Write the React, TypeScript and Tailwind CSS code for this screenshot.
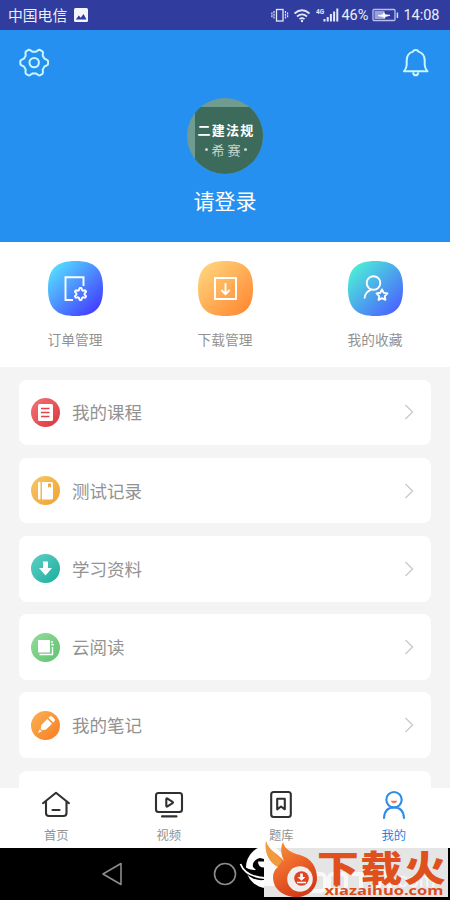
import type { ReactNode } from "react";

// Gear outline with soft, flattened teeth
function gearPath(cx: number, cy: number, base: number, amp: number, offset = 0) {
  const points: string[] = [];
  for (let i = 0; i < 96; i++) {
    const a = (i / 96) * Math.PI * 2;
    const wave = Math.max(-0.9, Math.min(1, 1.5 * Math.cos(6 * a + offset)));
    const r = base + amp * wave;
    points.push(`${(cx + r * Math.cos(a)).toFixed(2)} ${(cy + r * Math.sin(a)).toFixed(2)}`);
  }
  return `M${points.join("L")}Z`;
}

type MenuItem = {
  label: string;
  badge: string;
  icon: ReactNode;
};

const menuItems: MenuItem[] = [
  {
    label: "我的课程",
    badge: "bg-linear-to-br from-[#f27478] to-[#dc2f38]",
    icon: (
      <>
        <rect x="7" y="6" width="15" height="17" rx="1.5" fill="#fff" />
        <path d="M10 10.500h8.500M10 14.500h8.500M10 18.500h8.500" stroke="#e0444b" strokeWidth="1.500" />
      </>
    ),
  },
  {
    label: "测试记录",
    badge: "bg-linear-to-br from-[#f6c766] to-[#f0a12c]",
    icon: (
      <>
        <rect x="7" y="6" width="2.500" height="17.500" rx="1" fill="#fff" />
        <path d="M11 6h9.500q1.500 0 1.500 1.500v14.500q0 1.500-1.500 1.500h-9.500z" fill="#fff" />
        <path d="M17 7.500h3v4.300l-1.500-1.100-1.500 1.100z" fill="#f0a944" />
      </>
    ),
  },
  {
    label: "学习资料",
    badge: "bg-linear-to-br from-[#5bd0c4] to-[#12ad9f]",
    icon: <path d="M12 7.500h5v6.500h4l-6.500 7.500-6.500-7.500h4z" fill="#fff" />,
  },
  {
    label: "云阅读",
    badge: "bg-linear-to-br from-[#93dc9c] to-[#5cc26e]",
    icon: (
      <>
        <path d="M7 7h12v12.500h-12z" fill="#fff" />
        <path d="M8.500 21.500h13v-7.500M21 8v2.300M20.300 11.800h2.500" fill="none" stroke="#fff" strokeWidth="1.400" />
      </>
    ),
  },
  {
    label: "我的笔记",
    badge: "bg-linear-to-br from-[#fbb154] to-[#f67c1c]",
    icon: (
      <g transform="rotate(45 14.500 14.500)" fill="#fff">
        <path d="M11.200 5q0-1.500 1.500-1.500h3.600q1.500 0 1.500 1.500v2h-6.600z" />
        <path d="M11.200 8.600h6.600v8.400l-2.300 3.200h-2l-2.300-3.200z" />
        <path d="M13 21.300h3l-1.500 3.900z" />
      </g>
    ),
  },
];

const shortcuts = [
  {
    label: "订单管理",
    from: "#55dcff",
    to: "#443cff",
    icon: (
      <>
        <path d="M35.500 25v-8.800H17.500v22.800h7.500" />
        <path d={gearPath(32.500, 33, 5, 1, Math.PI)} strokeLinejoin="round" />
      </>
    ),
  },
  {
    label: "下载管理",
    from: "#ffd27a",
    to: "#ff8b35",
    icon: <path d="M17 17h21v21h-21zM27.500 22v11M23.300 29l4.200 4.200 4.200-4.200" />,
  },
  {
    label: "我的收藏",
    from: "#4dedd8",
    to: "#4a63ff",
    icon: (
      <>
        <circle cx="25.500" cy="22" r="6.800" />
        <path d="M16.500 37.500q.4-6.500 7-8.800" />
        <path
          d="M34 28.400l1.700 3.400 3.800.6-2.700 2.700.6 3.800-3.400-1.800-3.400 1.800.6-3.800-2.700-2.700 3.800-.6z"
          strokeLinejoin="round"
        />
      </>
    ),
  },
];

const tabs = [
  {
    label: "首页",
    active: false,
    icon: (
      <>
        <path d="M2 13.200 15 2.800l13 10.400M5 11v12q0 3 3 3h14.500q3 0 3-3V11" />
        <path d="M11.500 20h7" />
      </>
    ),
  },
  {
    label: "视频",
    active: false,
    icon: (
      <>
        <rect x="2" y="3" width="26" height="19" rx="2.500" />
        <path d="M12.300 9.200q0-1.300 1.200-.6l5 3.200q1 .7 0 1.400l-5 3.200q-1.200.7-1.200-.6zM8 26.400h14.500" />
      </>
    ),
  },
  {
    label: "题库",
    active: false,
    icon: (
      <>
        <rect x="5.200" y="2" width="19.600" height="25" rx="2.500" />
        <path d="M11.200 8.800h7.600v10.500l-3.800-2.800-3.800 2.800z" />
      </>
    ),
  },
  {
    label: "我的",
    active: true,
    icon: (
      <>
        <circle cx="15" cy="9.700" r="7.700" />
        <path d="M5 28q.6-10.500 10-10.500t10 10.500" />
        <path d="M11.700 10.700h6.600q-.7 2.500-3.300 2.500t-3.300-2.500z" fill="#f17a55" stroke="none" />
      </>
    ),
  },
];

function StatusBar() {
  return (
    <div className="flex h-[30px] shrink-0 items-center bg-[#303d9f] text-[#eceefa]">
      <span className="ml-2 text-[14.800px] leading-none">中国电信</span>
      <svg className="ml-[7px]" width="14" height="14" viewBox="0 0 14 14">
        <rect width="14" height="14" rx="1.500" fill="#f4f5ff" />
        <path d="M1.800 11.500l3-4 2 2.300 2.700-3.800 3 5.500z" fill="#303d9f" />
      </svg>
      <svg className="ml-auto" width="69" height="20" viewBox="0 0 69 20" fill="none" stroke="#e4e7fa">
        <rect x="5.500" y="4.500" width="6.500" height="11.500" strokeWidth="1.300" />
        <path d="M3 6v8M14.500 6v8M.9 7.500v5M16.600 7.500v5" strokeWidth="1.200" strokeDasharray="2 .8" />
        <path d="M23.500 8.500q7.500-6.500 15 0M26 11.500q5-4.200 10 0M28.500 14.200q2.500-2 5 0" strokeWidth="1.700" />
        <circle cx="31" cy="16" r="1.200" fill="#e4e7fa" stroke="none" />
        <text x="45" y="8.500" fill="#e4e7fa" stroke="none" fontSize="6.500" fontWeight="700" fontFamily="Roboto">
          4G
        </text>
        <path d="M53.500 14v2.500M56.700 12v4.500M59.900 9v7.500M63.100 6.500v10M66.300 3.500v13" strokeWidth="2" />
      </svg>
      <span className="ml-[1px] pt-[2px] font-[Roboto] text-[14.500px] leading-none">46%</span>
      <svg className="ml-1" width="27" height="14" viewBox="0 0 27 14">
        <rect x="1" y="1.500" width="22" height="11" rx="1" fill="none" stroke="#b9c0ee" strokeWidth="1.300" />
        <rect x="2.500" y="3" width="10" height="8" fill="#9aa3dc" />
        <path d="M6 7.600l5-.8.900-2 1.300 2 4.800.5-4.600 1.200-1 1.800-1.300-1.700z" fill="#fff" stroke="#fff" strokeWidth=".8" />
        <path d="M25.400 4.500v5.500" stroke="#d5d9f6" strokeWidth="1.500" />
      </svg>
      <span className="ml-1 mr-[10.500px] pt-[2px] font-[Roboto] text-[14.500px] leading-none">14:08</span>
    </div>
  );
}

function Header() {
  return (
    <header className="flex h-[212px] shrink-0 flex-col bg-[#2590ef]">
      <div className="flex h-[68px] justify-between px-[18px] pt-4">
        <svg width="32" height="32" viewBox="0 0 32 32" fill="none" stroke="#c9f6ff" strokeWidth="2" strokeLinejoin="round">
          <path d={gearPath(16.200, 16.600, 12.300, 1.600)} />
          <circle cx="16.200" cy="16.600" r="4.700" />
        </svg>
        <svg width="32" height="32" viewBox="0 0 32 32" fill="none" stroke="#c9f6ff" strokeWidth="2" strokeLinejoin="round">
          <path d="M4 25.300h23.500q-2.800-3.200-2.800-6.500v-4.500c0-5-2.600-7.600-6.200-8.700q-.5-1.600-2.800-1.600t-2.800 1.600c-3.600 1.100-6.200 3.700-6.200 8.700v4.500q0 3.300-2.700 6.500z" />
          <path d="M13.100 26.300q.4 3 2.600 3t2.600-3" />
        </svg>
      </div>
      <div className="flex flex-col items-center">
        <div className="h-[76px] w-[76px] overflow-hidden rounded-full bg-[#709b91] pl-[8px] pt-[9px]">
          <div className="flex h-full w-full flex-col items-center bg-[#3c6b5b] pr-[6px] text-white">
            <span className="mt-[14px] whitespace-nowrap text-[13px] font-bold leading-[18px] tracking-[1.200px]">
              二建法规
            </span>
            <div className="flex items-center gap-[4px] text-[13px] leading-[21px] text-[#c5d5ce]">
              <i className="h-[3px] w-[3px] rounded-full bg-[#c5d5ce]" />
              <span className="whitespace-pre">希 赛</span>
              <i className="h-[3px] w-[3px] rounded-full bg-[#c5d5ce]" />
            </div>
          </div>
        </div>
        <span className="mt-[11px] text-[21px] leading-[30px] text-white">请登录</span>
      </div>
    </header>
  );
}

function Shortcuts() {
  return (
    <div className="grid h-[125px] shrink-0 grid-cols-3 bg-white">
      {shortcuts.map((item, index) => (
        <div key={item.label} className="flex flex-col items-center pt-[19px]">
          <svg width="55" height="55" viewBox="0 0 55 55" fill="none">
            <defs>
              <linearGradient id={`shortcut-${index}`} x1="0.1" y1="0.1" x2="0.9" y2="0.9">
                <stop stopColor={item.from} />
                <stop offset="1" stopColor={item.to} />
              </linearGradient>
            </defs>
            <path
              d="M27.500 0C47 0 55 8 55 27.500S47 55 27.500 55 0 47 0 27.500 8 0 27.500 0z"
              fill={`url(#shortcut-${index})`}
            />
            <g stroke="#fff" strokeWidth="1.900">
              {item.icon}
            </g>
          </svg>
          <span className="mt-[13px] text-[13.700px] leading-5 text-[#929292]">{item.label}</span>
        </div>
      ))}
    </div>
  );
}

function Menu() {
  return (
    <div className="flex min-h-0 flex-1 flex-col gap-[12.700px] overflow-hidden bg-[#f4f4f4] px-[19px] pt-[12.700px]">
      {menuItems.map((item) => (
        <div key={item.label} className="flex h-[65.500px] shrink-0 items-center rounded-lg bg-white pl-3 pr-[17px]">
          <div className={`h-[29px] w-[29px] rounded-full ${item.badge}`}>
            <svg width="29" height="29" viewBox="0 0 29 29">
              {item.icon}
            </svg>
          </div>
          <span className="ml-3 text-[17.500px] leading-6 text-[#929292]">{item.label}</span>
          <svg className="ml-auto" width="10" height="16" viewBox="0 0 10 16" fill="none" stroke="#cacaca" strokeWidth="1.400">
            <path d="M1.500 1l7 7-7 7" />
          </svg>
        </div>
      ))}
      <div className="h-[65.500px] shrink-0 rounded-lg bg-white" />
    </div>
  );
}

function TabBar() {
  return (
    <nav className="grid h-[60px] shrink-0 grid-cols-4 bg-white">
      {tabs.map((tab) => (
        <div
          key={tab.label}
          className={`flex flex-col items-center pt-[2px] ${tab.active ? "text-[#2787e0]" : "text-[#929292]"}`}
        >
          <svg
            width="30"
            height="30"
            viewBox="0 0 30 30"
            fill="none"
            stroke={tab.active ? "#2f8ce4" : "#303030"}
            strokeWidth="2.100"
            strokeLinecap="round"
            strokeLinejoin="round"
          >
            {tab.icon}
          </svg>
          <span className="mt-[6px] text-[12.300px] leading-[18px]">{tab.label}</span>
        </div>
      ))}
    </nav>
  );
}

function SystemNav() {
  return (
    <div className="flex h-[52px] shrink-0 items-center bg-black">
      <svg className="ml-[101px]" width="136" height="26" viewBox="0 0 136 26" fill="none" stroke="#8c8c8c" strokeWidth="1.600">
        <path d="M2 13l18-10.500v21z" strokeLinejoin="round" />
        <circle cx="124" cy="13" r="10.500" />
      </svg>
    </div>
  );
}

function Watermark() {
  return (
    <div className="absolute bottom-0 left-[236px] h-[62px] w-[214px]">
      <svg width="214" height="62" viewBox="0 0 214 62">
        <defs>
          <linearGradient id="flame" x1="0" y1="0" x2="0.6" y2="1">
            <stop stopColor="#f6a03a" />
            <stop offset="0.5" stopColor="#ee6a2b" />
            <stop offset="1" stopColor="#d63b18" />
          </linearGradient>
        </defs>
        <circle cx="31" cy="29" r="21" fill="#fff" />
        <path d="M6 27c5 4 9 5 14 5l-3-3c-1-4 2-8 7-9l4 1v21c-10 1-19-4-22-15z" fill="#000" />
        <path d="M22 23.500h6v6q-6 0-6-6z" fill="#fff" />
        <path d="M4.500 26c3 8 11 13 24 14" fill="none" stroke="#fff" strokeWidth="1.800" />
        <path d="M28 10h184v49h-184z" fill="#e5e5e5" />
        <path d="M28 10h12q11 8 11 19t-11 19h-12z" fill="#fafafa" />
        <g fill="none" stroke="#f8f8f8" strokeWidth="4">
          <rect x="72" y="36" width="17" height="17" rx="4" />
          <rect x="93" y="36" width="17" height="17" rx="4" />
          <path d="M116 36h18M125 36v19M140 54l8-18 8 18" />
        </g>
        <text x="156" y="49" fill="#f8f8f8" fontSize="20" fontFamily="Liberation Sans">
          .com
        </text>
        {/* outer tongue on the left, then the taller one curling into the ring */}
        <path
          d="M30 3c2 9 11 12 18 20-3-7-4-13-1-19 2 8 9 11 17 13 11 3 17 12 17 23 0 11-9 19-20 19-14 0-24-8-24-20 0-4 2-8 5-10-7-4-14-12-12-26z"
          fill="url(#flame)"
        />
        <path d="M30 3c2 9 11 12 16 20l-4 6c-7-4-14-12-12-26z" fill="#f29a40" />
        <circle cx="64" cy="41" r="12.800" fill="#efefef" />
        <circle cx="65.500" cy="40.500" r="7.300" fill="#df4423" />
        <path d="M64.200 35.500h2.600v3.600h2.700l-4 3.600-4-3.600h2.700zM61 43.700h9v1.500h-9z" fill="#fff" />
        <g transform="translate(81 43.500) scale(1.160 1)">
          <text
            fill="#e0501d"
            fontSize="36"
            fontWeight="900"
            fontFamily="Noto Sans CJK SC, sans-serif"
            textLength="111"
          >
            下载火
          </text>
        </g>
        <text
          x="88.500"
          y="57"
          fill="#dc4c1b"
          fontSize="13"
          fontWeight="700"
          fontFamily="Open Sans, DejaVu Sans, sans-serif"
          textLength="119"
          lengthAdjust="spacingAndGlyphs"
        >
          xiazaihuo.com
        </text>
      </svg>
    </div>
  );
}

export default function App() {
  return (
    <div className="relative flex h-[900px] w-[450px] flex-col overflow-hidden bg-white font-['Noto_Sans_CJK_SC',sans-serif]">
      <StatusBar />
      <Header />
      <Shortcuts />
      <Menu />
      <TabBar />
      <SystemNav />
      <Watermark />
    </div>
  );
}
